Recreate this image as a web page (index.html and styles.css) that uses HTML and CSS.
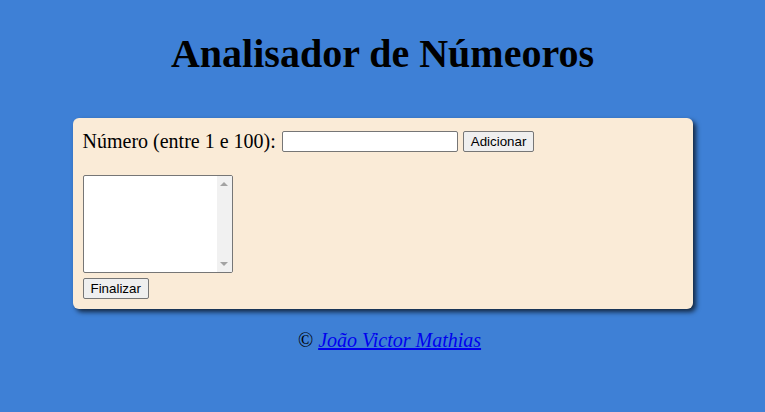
FILE: index.html
```html
<!DOCTYPE html>
<html lang="pt-BR">
<head>
<meta charset="utf-8">
<title>Analisador de Números</title>
<link rel="stylesheet" href="styles.css">
</head>
<body>
<header>
  <h1 class="title">Analisador de Númeoros</h1>
</header>
<section class="panel">
  <div class="row">
    <label class="label" for="num">Número (entre 1 e 100):</label>
    <input class="field" type="text" id="num">
    <button class="btn" type="button">Adicionar</button>
  </div>
  <div class="listbox">
    <div class="list-area"></div>
    <div class="scroll">
      <span class="arrow up"></span>
      <span class="arrow down"></span>
    </div>
  </div>
  <div class="row-end">
    <button class="btn" type="button">Finalizar</button>
  </div>
</section>
<footer class="footer">
  <p class="credit">&copy; <a class="link" href="#">João Victor Mathias</a></p>
</footer>
</body>
</html>
```
FILE: styles.css
```css
html, body { height: 100%; }
body {
  margin: 8px;
  background: #3e80d6;
  font-family: "Liberation Serif", "Times New Roman", serif;
  font-size: 20px;
  color: #000;
}
.title {
  text-align: center;
  font-size: 40px;
  font-weight: bold;
  margin: 22px 0 41px;
}
.panel {
  width: 600px;
  margin: 0 auto;
  padding: 10px;
  background: #faebd7;
  border-radius: 6px;
  box-shadow: 3px 3px 5px rgba(0,0,0,0.7);
  display: flex;
  flex-direction: column;
  align-items: flex-start;
}
.row {
  display: flex;
  align-items: center;
  gap: 5px;
  margin-top: 2px;
}
.field {
  width: 176px;
  height: 21px;
  box-sizing: border-box;
  border: 1px solid #767676;
  border-radius: 2px;
  background: #fff;
  padding: 1px 2px;
  font-size: 13.33px;
  margin-left: 1px;
}
.btn {
  font-family: Arial, "Liberation Sans", sans-serif;
  font-size: 13.33px;
  height: 21px;
  padding: 1px 7px;
  border: 1px solid #767676;
  border-radius: 2px;
  background: #efefef;
  color: #000;
  line-height: 16px;
}
.listbox {
  margin-top: 22px;
  width: 150px;
  height: 98px;
  box-sizing: border-box;
  border: 1px solid #767676;
  border-radius: 2px;
  background: #fff;
  display: flex;
  overflow: hidden;
}
.list-area { flex: 1; }
.scroll {
  width: 15px;
  background: #f1f1f1;
  position: relative;
}
.arrow {
  position: absolute;
  left: 3px;
  width: 0;
  height: 0;
  border-left: 4px solid transparent;
  border-right: 4px solid transparent;
}
.arrow.up { top: 6px; border-bottom: 4px solid #a3a3a3; }
.arrow.down { bottom: 6px; border-top: 4px solid #a3a3a3; }
.row-end { display: flex; margin-top: 5px; }
.footer { text-align: center; padding-left: 14px; }
.credit { margin: 20px 0; }
.link { color: #0000ee; font-style: italic; }
```
